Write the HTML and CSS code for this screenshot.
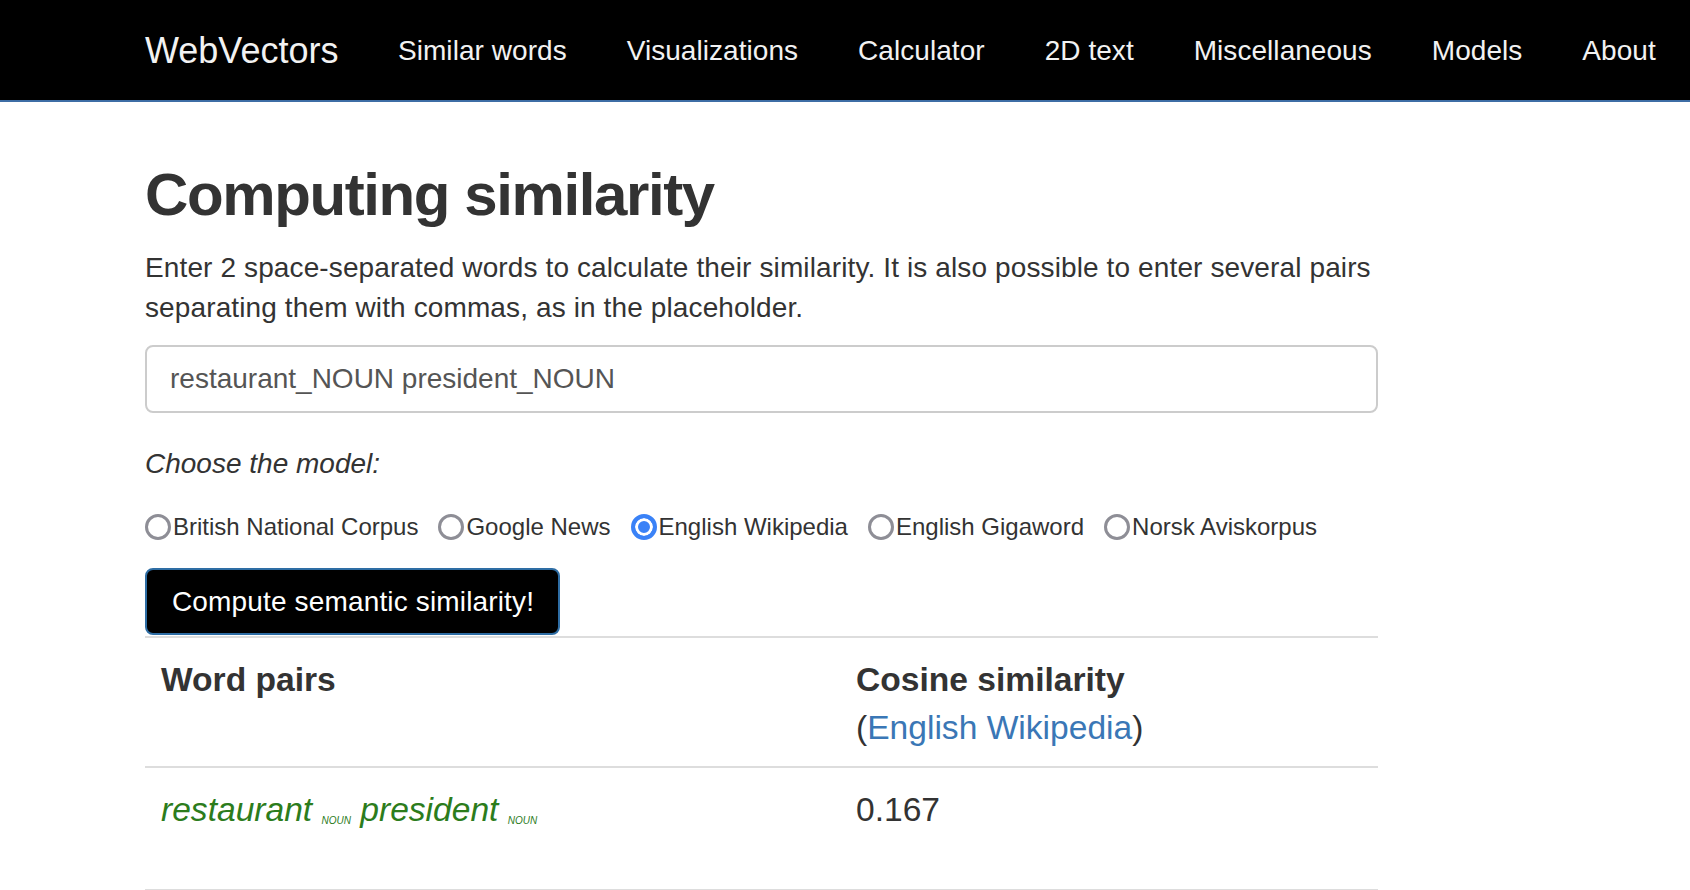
FILE: index.html
```html
<!DOCTYPE html>
<html lang="en">
<head>
<meta charset="utf-8">
<title>WebVectors: Computing similarity</title>
<link rel="stylesheet" href="styles.css">
</head>
<body>
<nav class="navbar">
  <a class="brand" href="#">WebVectors</a>
  <ul class="nav-links">
    <li><a href="#">Similar words</a></li>
    <li><a href="#">Visualizations</a></li>
    <li><a href="#">Calculator</a></li>
    <li><a href="#">2D text</a></li>
    <li><a href="#">Miscellaneous</a></li>
    <li><a href="#">Models</a></li>
    <li><a href="#">About</a></li>
  </ul>
</nav>
<main class="page">
  <h2 class="title">Computing similarity</h2>
  <p class="lead-text">Enter 2 space-separated words to calculate their similarity. It is also possible to enter several pairs separating them with commas, as in the placeholder.</p>
  <form class="query-form">
    <input class="query-input" type="text" value="restaurant_NOUN president_NOUN">
    <p class="model-label">Choose the model:</p>
    <div class="radio-row">
      <label class="radio-item"><input type="radio" name="model" class="radio"><span>British National Corpus</span></label>
      <label class="radio-item"><input type="radio" name="model" class="radio"><span>Google News</span></label>
      <label class="radio-item"><input type="radio" name="model" class="radio" checked><span>English Wikipedia</span></label>
      <label class="radio-item"><input type="radio" name="model" class="radio"><span>English Gigaword</span></label>
      <label class="radio-item"><input type="radio" name="model" class="radio"><span>Norsk Aviskorpus</span></label>
    </div>
    <button type="button" class="btn-compute">Compute semantic similarity!</button>
  </form>
  <table class="result-table">
    <thead>
      <tr>
        <th class="col-pairs">Word pairs</th>
        <th class="col-sim">Cosine similarity<br><span class="normal">(<a href="#">English Wikipedia</a>)</span></th>
      </tr>
    </thead>
    <tbody>
      <tr>
        <td class="pair">restaurant <sub>NOUN</sub> president <sub>NOUN</sub></td>
        <td class="value">0.167</td>
      </tr>
    </tbody>
  </table>
</main>
</body>
</html>
```
FILE: styles.css
```css
* { box-sizing: border-box; }
html, body { margin: 0; padding: 0; background: #fff; }
body {
  font-family: "Liberation Sans", Arial, Helvetica, sans-serif;
  font-size: 28px;
  line-height: 40px;
  color: #333;
  overflow-x: hidden;
}
a { text-decoration: none; }

.navbar {
  display: flex;
  align-items: center;
  height: 102px;
  background: #000;
  border-bottom: 2px solid #3d6da5;
  padding-left: 145px;
  padding-top: 2px;
  white-space: nowrap;
}
.brand {
  flex: 0 0 223px;
  color: #f2f2f2;
  font-size: 36px;
}
.nav-links {
  display: flex;
  flex-shrink: 0;
  list-style: none;
  margin: 0;
  padding: 0;
}
.nav-links li { flex-shrink: 0; }
.nav-links a {
  display: block;
  padding: 0 30px;
  color: #f2f2f2;
  font-size: 28px;
  letter-spacing: 0.05px;
  white-space: nowrap;
}

.page {
  width: 1378px;
  padding: 60px 0 0 145px;
}
.title {
  margin: 0 0 20px;
  font-size: 60px;
  line-height: 66px;
  font-weight: bold;
  letter-spacing: -1.4px;
  color: #333;
}
.lead-text {
  margin: 0 0 17px;
  letter-spacing: 0.12px;
}
.query-form { margin: 0; }
.query-input {
  display: block;
  width: 100%;
  height: 68px;
  padding: 0 23px;
  border: 2px solid #ccc;
  border-radius: 8px;
  font-family: inherit;
  font-size: 28px;
  color: #555;
  background: #fff;
  outline: none;
}
.model-label {
  margin: 31px 0 23px;
  font-style: italic;
}
.radio-row {
  display: flex;
  gap: 20px;
  height: 40px;
  align-items: center;
}
.radio-item {
  display: flex;
  align-items: center;
  font-size: 24px;
  color: #333;
}
.radio {
  appearance: none;
  -webkit-appearance: none;
  width: 26px;
  height: 26px;
  margin: 0 2px 0 0;
  border: 3px solid #8e8e96;
  border-radius: 50%;
  background: #fff;
}
.radio:checked {
  border: 4px solid #3a82f7;
  background: #3a82f7;
  box-shadow: inset 0 0 0 3px #fff;
}
.btn-compute {
  display: block;
  margin-top: 21px;
  height: 67px;
  padding: 0 24px 0 25px;
  background: #000;
  color: #fff;
  border: 2px solid #2e6da4;
  border-radius: 8px;
  font-family: inherit;
  font-size: 28px;
  letter-spacing: 0.15px;
}

.result-table {
  width: 100%;
  margin-top: 1px;
  border-collapse: collapse;
  font-size: 33.6px;
  line-height: 48px;
}
.result-table th,
.result-table td {
  text-align: left;
  vertical-align: top;
  padding: 18px 16px 14px;
}
.result-table th {
  font-weight: bold;
  border-top: 2px solid #ddd;
  border-bottom: 2px solid #ddd;
}
.result-table td {
  padding-bottom: 55px;
  border-bottom: 2px solid #ddd;
}
.col-pairs { width: 695px; }
.normal { font-weight: normal; }
.normal a { color: #3a77b6; }
.pair {
  color: #2c7c1c;
  font-style: italic;
}
.pair sub {
  font-size: 10px;
  line-height: 0;
  vertical-align: -3px;
}
```
